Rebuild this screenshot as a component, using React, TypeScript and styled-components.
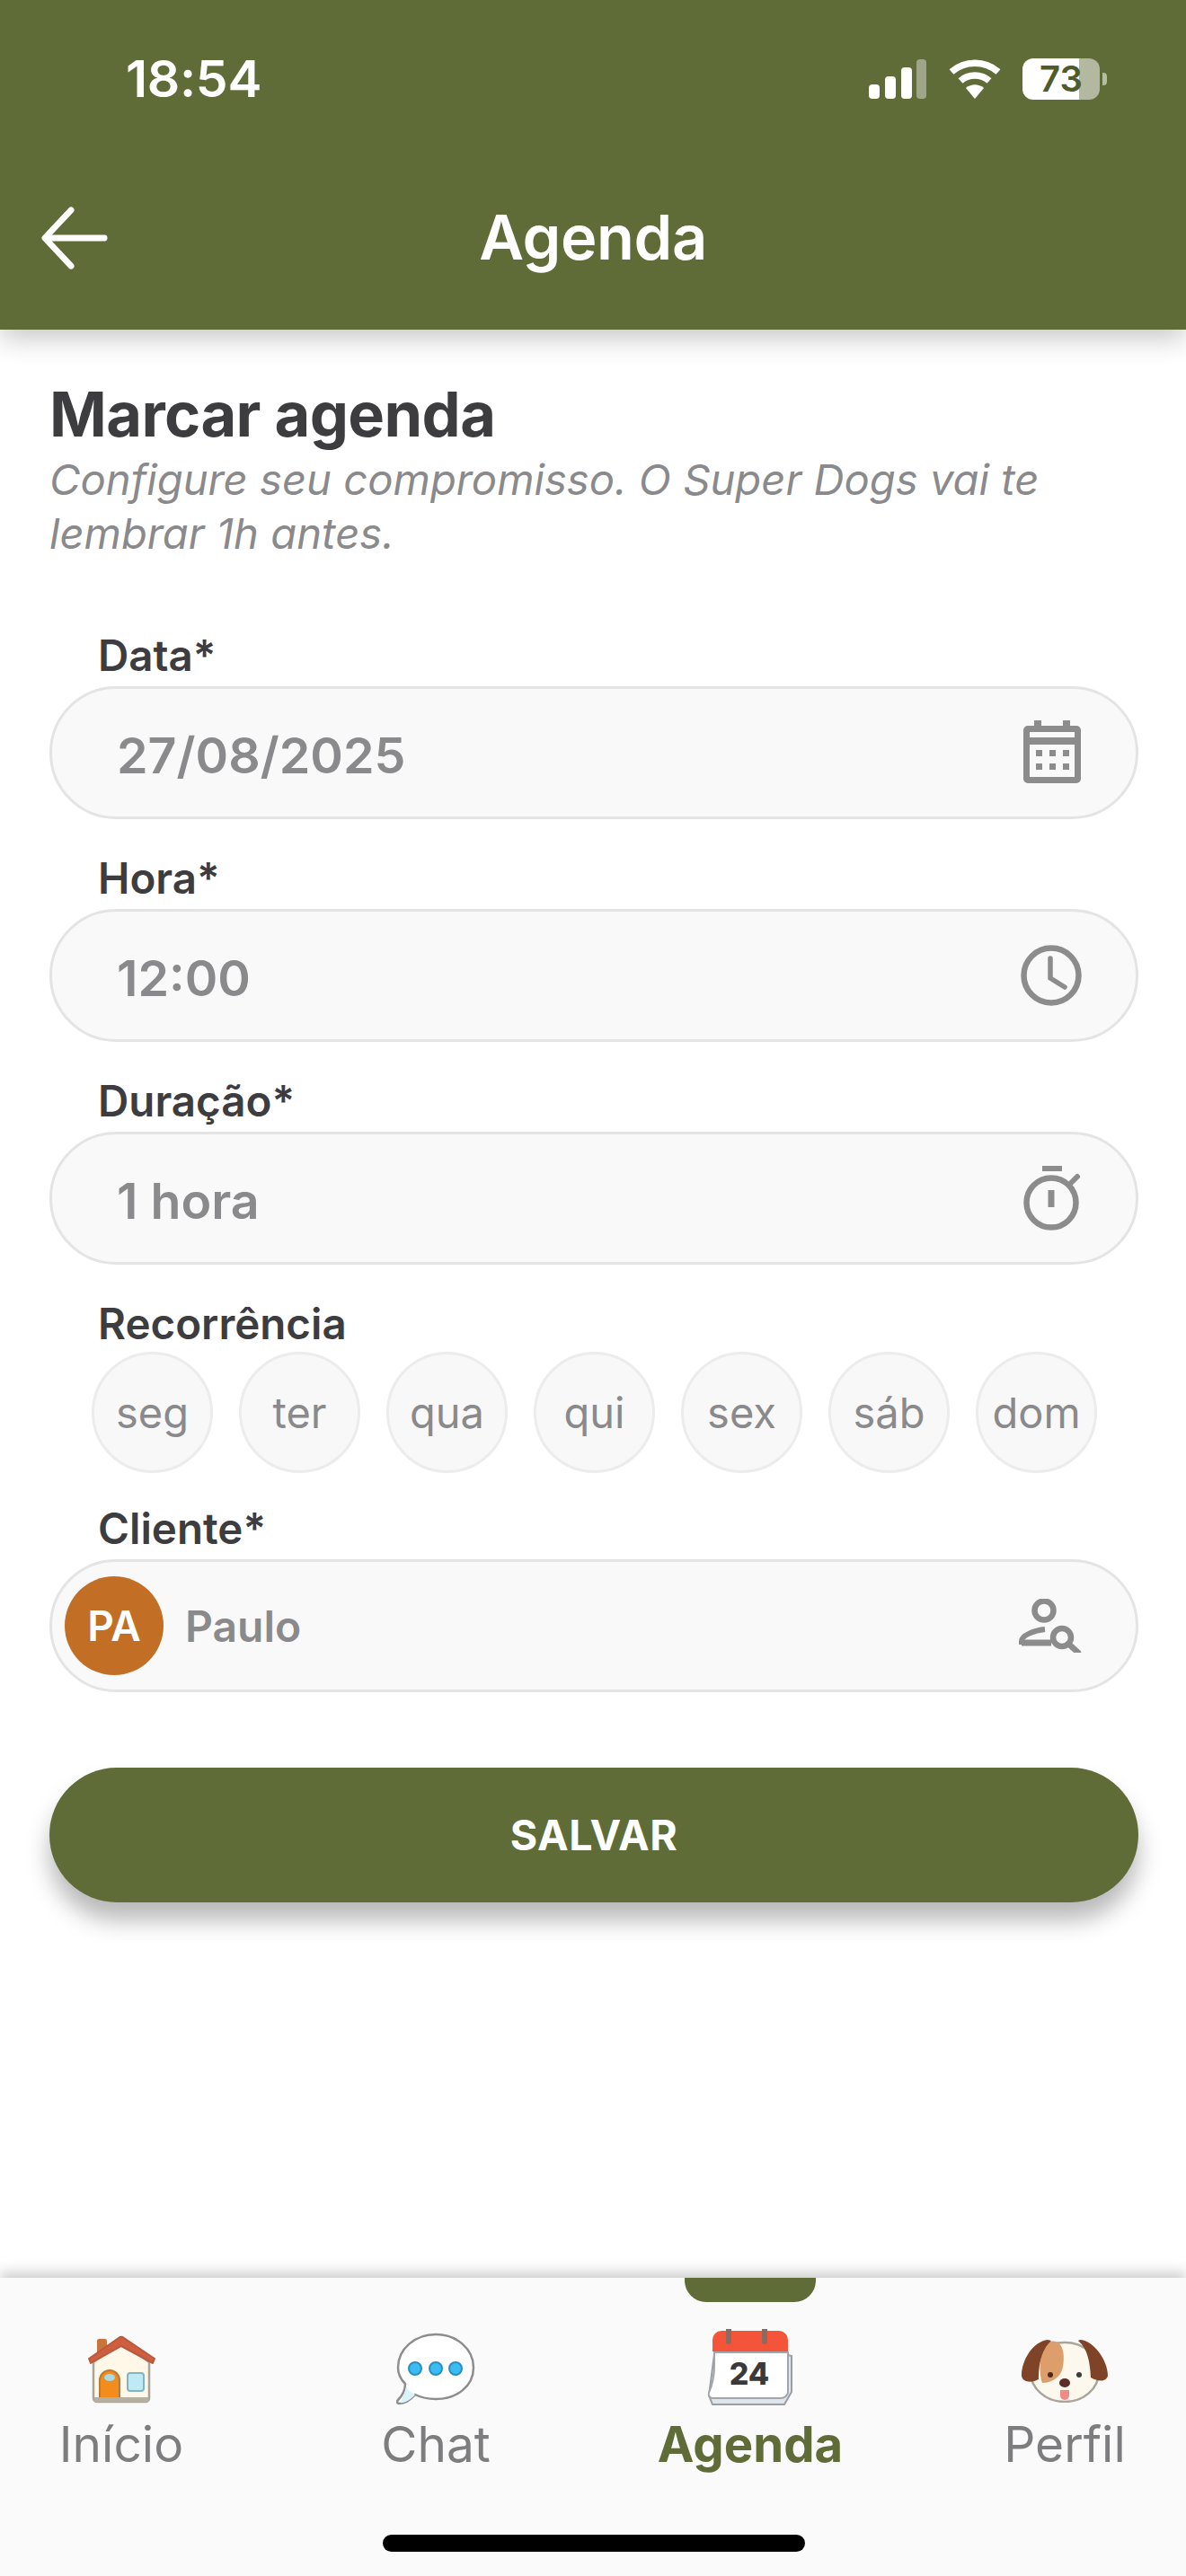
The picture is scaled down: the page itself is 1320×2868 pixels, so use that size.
import React from "react";
import styled, { createGlobalStyle } from "styled-components";

const Global = createGlobalStyle`
  html, body { margin: 0; padding: 0; background: #fff; }
  body { font-family: Inter, "Liberation Sans", sans-serif; overflow: hidden; }
  * { box-sizing: border-box; }
`;

const GREEN = "#606c38";

const Screen = styled.div`
  width: 1320px; height: 2868px; display: flex; flex-direction: column;
  background: #fff; overflow: hidden;
`;
const Header = styled.header`
  height: 367px; background: ${GREEN}; color: #fff; flex: none;
  box-shadow: 0 10px 28px rgba(0,0,0,.22); position: relative; z-index: 1;
  display: flex; flex-direction: column;
`;
const StatusBar = styled.div`
  height: 207px; display: flex; align-items: flex-start; justify-content: space-between;
  padding: 56px 96px 0 140px;
`;
const Time = styled.div`font-size: 57px; line-height: 64px; font-weight: 600; letter-spacing: -0.3px;`;
const StatusIcons = styled.div`display: flex; align-items: center; gap: 24px; height: 64px;`;
const Battery = styled.div`
  width: 86px; height: 46px; border-radius: 12px; position: relative;
  background: linear-gradient(90deg, #fff 0 73%, rgba(255,255,255,.52) 73% 100%);
  color: #505b2c; font-size: 40px; line-height: 46px; font-weight: 600; text-align: center;
  &::after {
    content: ""; position: absolute; right: -8px; top: 16px; width: 5px; height: 14px;
    border-radius: 0 4px 4px 0; background: rgba(255,255,255,.55);
  }
`;
const NavRow = styled.div`
  height: 116px; display: grid; grid-template-columns: 120px 1fr 120px; align-items: center;
`;
const BackButton = styled.div`display: flex; padding-left: 46px; align-items: center;`;
const NavTitle = styled.h1`
  margin: 0; text-align: center; font-size: 68.5px; line-height: 80px; font-weight: 600; letter-spacing: -0.4px;
`;
const Main = styled.main`flex: 1; padding: 57px 55px 0; display: flex; flex-direction: column;`;
const Title = styled.h2`
  margin: 0 0 4px; font-size: 68.5px; line-height: 76px; font-weight: 700; color: #3d3d3f; letter-spacing: -0.6px;
`;
const Subtitle = styled.p`
  margin: 0 0 78px; font-size: 47.2px; line-height: 60px; font-style: italic; font-weight: 400; color: #8a8a8c;
  height: 120px; width: 1210px;
`;
const FieldGroup = styled.div`display: flex; flex-direction: column; margin-bottom: 38px;`;
const Label = styled.label`
  font-size: 47.5px; line-height: 56px; height: 62px; font-weight: 600; color: #3d3d3f; padding-left: 54px;
`;
const InputBox = styled.div`
  height: 148px; width: 1212px; border: 3px solid #e4e4e4; border-radius: 74px; background: #f9f9f9;
  display: flex; align-items: center; justify-content: space-between;
  padding: 0 60px 0 72px;
`;
const InputValue = styled.span`font-size: 55.5px; font-weight: 600; color: #8a8a8c; padding-top: 4px;`;
const ClientCell = styled.div`display: flex; align-items: center; gap: 24px;`;
const Avatar = styled.div`
  width: 110px; height: 110px; border-radius: 50%; background: #c26e24; color: #fff;
  display: flex; align-items: center; justify-content: center; font-size: 46px; font-weight: 600;
`;
const ClientName = styled.span`font-size: 48px; font-weight: 600; color: #8a8a8c;`;
const Days = styled.div`display: flex; gap: 29px; padding-left: 47px; margin-top: -3px; margin-bottom: 34px;`;
const Day = styled.div`
  width: 135px; height: 135px; border-radius: 50%; border: 3px solid #ececec; background: #f8f8f8;
  display: flex; align-items: center; justify-content: center; font-size: 47px; color: #8a8a8c;
`;
const SaveButton = styled.button`
  margin-top: 84px; width: 1212px; height: 150px; border: 0; border-radius: 75px; background: ${GREEN};
  color: #fff; font: 700 46.5px Inter, sans-serif; letter-spacing: .5px;
  box-shadow: 0 20px 26px rgba(0,0,0,.28);
`;
const TabBar = styled.nav`
  height: 332px; flex: none; background: #fafafa; position: relative;
  box-shadow: 0 -6px 14px rgba(0,0,0,.2); padding-top: 54px;
`;
const Notch = styled.div`
  position: absolute; top: 0; left: 762px; width: 146px; height: 27px; background: ${GREEN};
  border-radius: 0 0 24px 24px;
`;
const Tabs = styled.div`
  display: grid; grid-template-columns: repeat(4, 350px); justify-content: center;
`;
const Tab = styled.div<{ $active?: boolean }>`
  display: flex; flex-direction: column; align-items: center;
  color: ${p => (p.$active ? GREEN : "#7d7d7f")};
  font-size: ${p => (p.$active ? 54.5 : 55)}px; font-weight: ${p => (p.$active ? 700 : 400)};
  line-height: 66px;
`;
const TabIcon = styled.div`height: 96px; margin-bottom: 2px; display: flex; align-items: center; justify-content: center;`;
const HomeBar = styled.div`
  position: absolute; left: 426px; bottom: 27px; width: 470px; height: 19px; border-radius: 10px; background: #000;
`;

const Signal = () => (
  <svg width="66" height="44" viewBox="0 0 66 44">
    <rect x="1" y="28" width="12" height="16" rx="4" fill="#fff" />
    <rect x="19" y="19" width="12" height="25" rx="4" fill="#fff" />
    <rect x="37" y="9" width="12" height="35" rx="4" fill="#fff" />
    <rect x="54" y="0" width="11" height="44" rx="4" fill="#fff" opacity=".4" />
  </svg>
);
const Wifi = () => (
  <svg width="58" height="44" viewBox="0 0 58 44" fill="none" stroke="#fff" strokeWidth="7.5" strokeLinecap="butt">
    <path d="M3 14C18 1 40 1 55 14" />
    <path d="M13 24C22 16 36 16 45 24" />
    <path d="M29 44L19 32C25 27 33 27 39 32Z" fill="#fff" stroke="none" />
  </svg>
);
const BackArrow = () => (
  <svg width="76" height="72" viewBox="0 0 76 72" fill="none" stroke="#fff" strokeWidth="7" strokeLinecap="round" strokeLinejoin="round">
    <path d="M72 36H6M34 4L4 36L34 68" />
  </svg>
);
const CalIcon = () => (
  <svg width="66" height="72" viewBox="0 0 66 72" fill="#8c8c8c">
    <rect x="13" y="0" width="8" height="12" />
    <rect x="45" y="0" width="8" height="12" />
    <path fillRule="evenodd" d="M6 6H60A5 5 0 0 1 65 11V65A5 5 0 0 1 60 70H6A5 5 0 0 1 1 65V11A5 5 0 0 1 6 6ZM8 27V63H58V27ZM8 13V19H58V13Z" />
    <g>
      <rect x="15" y="33" width="7" height="7" /><rect x="30" y="33" width="7" height="7" /><rect x="45" y="33" width="7" height="7" />
      <rect x="15" y="48" width="7" height="7" /><rect x="30" y="48" width="7" height="7" /><rect x="45" y="48" width="7" height="7" />
    </g>
  </svg>
);
const ClockIcon = () => (
  <svg width="68" height="68" viewBox="0 0 68 68" fill="none" stroke="#8c8c8c" strokeWidth="6.5" strokeLinecap="round">
    <circle cx="34" cy="34" r="30.5" />
    <path d="M33 15V37L49 47" strokeWidth="5.5" />
  </svg>
);
const TimerIcon = () => (
  <svg width="66" height="72" viewBox="0 0 66 72" fill="none" stroke="#8c8c8c" strokeWidth="6.5">
    <path d="M22 3H44" strokeWidth="6" />
    <circle cx="32" cy="41" r="27.5" />
    <path d="M32 27V46" strokeWidth="7" />
    <path d="M53 20L61 12" strokeWidth="6" strokeLinecap="round" />
  </svg>
);
const PersonSearch = () => (
  <svg width="70" height="60" viewBox="0 0 70 60" fill="none" stroke="#8c8c8c" strokeWidth="6.5">
    <circle cx="28" cy="13" r="10.5" />
    <path d="M3 51V47C3 41 17 35 29 34" strokeWidth="6" />
    <path d="M3 49H36" strokeWidth="7" />
    <circle cx="48" cy="43" r="10" />
    <path d="M55 50L66 60" strokeLinecap="round" strokeWidth="6.5" />
  </svg>
);

const House = () => (
  <svg width="78" height="76" viewBox="0 0 78 76">
    <rect x="12" y="4" width="11" height="18" rx="2" fill="#c9743c" />
    <path d="M8 30L39 6L70 30V70A4 4 0 0 1 66 74H12A4 4 0 0 1 8 70Z" fill="#fff8e8" stroke="#a9a599" strokeWidth="2.5" />
    <path d="M3 26L36 3A5 5 0 0 1 42 3L76 26L74 31L39 12L5 31Z" fill="#cf5e40" stroke="#b85a3e" strokeWidth="2" strokeLinejoin="round" />
    <path d="M15 70V50A11 11 0 0 1 37 50V70Z" fill="#f28c1d" stroke="#b87b3c" strokeWidth="2" />
    <ellipse cx="26" cy="47" rx="6" ry="4" fill="#a6dce8" />
    <rect x="46" y="42" width="18" height="20" rx="3" fill="#bfeaf5" stroke="#82b5c0" strokeWidth="2" />
    <rect x="9" y="69" width="60" height="5" fill="#b5b0a4" />
  </svg>
);
const ChatBubble = () => (
  <svg width="88" height="82" viewBox="0 0 88 82">
    <path d="M44 2C67 2 86 18 86 39C86 60 67 74 44 74C35 74 27 72 21 69C16 75 9 79 3 79C1 79 0 77 2 75C7 70 10 63 10 57C5 52 2 46 2 39C2 18 21 2 44 2Z" fill="#fff" stroke="#8d8d8d" strokeWidth="2.5" />
    <path d="M11 60C13 64 17 67 21 69C16 75 9 79 4 78C8 72 10 66 11 60Z" fill="#d8f3fa" />
    <g fill="#3bbcf2" stroke="#2a8fbf" strokeWidth="2">
      <circle cx="21" cy="40" r="7" /><circle cx="44" cy="40" r="7" /><circle cx="66" cy="40" r="7" />
    </g>
  </svg>
);
const CalSticker = () => (
  <svg width="96" height="90" viewBox="0 0 96 90">
    <path d="M8 28H86L94 30V70L86 84H6L2 74Z" fill="#dfe5ea" stroke="#9a9fa4" strokeWidth="2" />
    <path d="M8 26H90V70C90 74 86 77 82 77H6C3 77 1 74 2 71C6 62 8 50 8 40Z" fill="#fff" stroke="#a2a6aa" strokeWidth="2" />
    <path d="M6 25V12A10 10 0 0 1 16 2H80A10 10 0 0 1 90 12V25Z" fill="#f4553a" />
    <path d="M24 1V14M64 1V14" stroke="#8c6a60" strokeWidth="6" strokeLinecap="round" />
    <text x="47" y="62" textAnchor="middle" fontFamily="Inter, sans-serif" fontWeight="800" fontSize="34" fill="#3a3a3a">24</text>
  </svg>
);
const Dog = () => (
  <svg width="98" height="74" viewBox="0 0 98 74">
    <ellipse cx="49" cy="40" rx="38" ry="33" fill="#fdf8ee" stroke="#aaa59b" strokeWidth="2.5" />
    <path d="M32 6C46 2 50 18 47 34C45 46 34 52 24 52C20 40 20 16 32 6Z" fill="#dc9e6a" />
    <path d="M30 4C14 6 1 26 1 44C2 52 13 52 20 48C20 34 22 16 34 5Z" fill="#7f4427" />
    <path d="M66 4C80 4 97 26 97 44C95 52 85 50 78 46C77 30 75 14 64 5Z" fill="#7f4427" />
    <circle cx="33" cy="43" r="3" fill="#4a2a20" />
    <circle cx="65" cy="43" r="3" fill="#3c3c3c" />
    <ellipse cx="49" cy="52" rx="6" ry="5" fill="#5b2f26" />
    <path d="M44 60H54V66A5 5 0 0 1 44 66Z" fill="#f08a86" />
  </svg>
);

const days = ["seg", "ter", "qua", "qui", "sex", "sáb", "dom"];
const fields = [
  { label: "Data*", value: "27/08/2025", icon: <CalIcon /> },
  { label: "Hora*", value: "12:00", icon: <ClockIcon /> },
  { label: "Duração*", value: "1 hora", icon: <TimerIcon /> },
];
const tabs = [
  { label: "Início", icon: <House /> },
  { label: "Chat", icon: <ChatBubble /> },
  { label: "Agenda", icon: <CalSticker />, active: true },
  { label: "Perfil", icon: <Dog /> },
];

const CompactBox = styled(InputBox)`padding: 0 60px 0 14px;`;

export default function App() {
  return (
    <Screen>
      <Global />
      <Header>
        <StatusBar>
          <Time>18:54</Time>
          <StatusIcons>
            <Signal />
            <Wifi />
            <Battery>73</Battery>
          </StatusIcons>
        </StatusBar>
        <NavRow>
          <BackButton><BackArrow /></BackButton>
          <NavTitle>Agenda</NavTitle>
          <span />
        </NavRow>
      </Header>
      <Main>
        <Title>Marcar agenda</Title>
        <Subtitle>Configure seu compromisso. O Super Dogs vai te lembrar 1h antes.</Subtitle>
        {fields.map(f => (
          <FieldGroup key={f.label}>
            <Label>{f.label}</Label>
            <InputBox>
              <InputValue>{f.value}</InputValue>
              {f.icon}
            </InputBox>
          </FieldGroup>
        ))}
        <Label>Recorrência</Label>
        <Days>
          {days.map(d => <Day key={d}>{d}</Day>)}
        </Days>
        <Label>Cliente*</Label>
        <CompactBox>
          <ClientCell>
            <Avatar>PA</Avatar>
            <ClientName>Paulo</ClientName>
          </ClientCell>
          <PersonSearch />
        </CompactBox>
        <SaveButton>SALVAR</SaveButton>
      </Main>
      <TabBar>
        <Notch />
        <Tabs>
          {tabs.map(t => (
            <Tab key={t.label} $active={t.active}>
              <TabIcon>{t.icon}</TabIcon>
              {t.label}
            </Tab>
          ))}
        </Tabs>
        <HomeBar />
      </TabBar>
    </Screen>
  );
}
